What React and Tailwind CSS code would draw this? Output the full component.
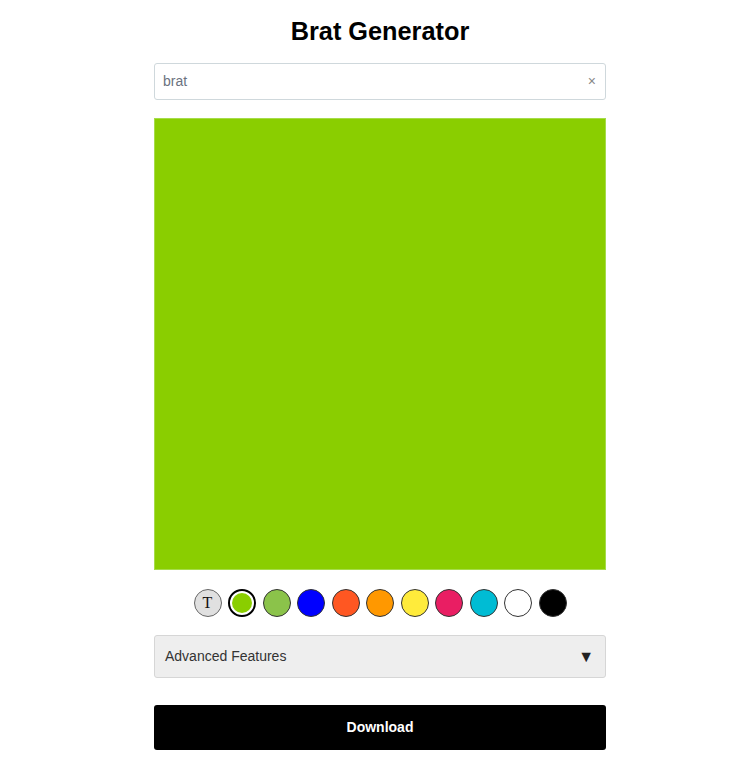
import React from "react";

const colors = ["#8BC34A", "#0000FF", "#FF5722", "#FF9800", "#FFEB3B", "#E91E63", "#00BCD4", "#FFFFFF", "#000000"];

export default function App() {
  return (
    <div className="min-h-[772px] bg-white" style={{ fontFamily: '"Liberation Sans", Arial, sans-serif' }}>
      <div className="w-[452px] ml-[154px] pt-[16px] flex flex-col">
        <h1 className="text-[25.3px] leading-[30px] font-bold text-black text-center">Brat Generator</h1>
        <div className="mt-[17px] h-[37px] border border-[#cfd8dc] rounded-[3px] flex items-center px-[8px]">
          <span className="flex-1 text-[14px] text-[#6b7280]">brat</span>
          <span className="text-[14px] text-[#888] mr-[1px]">×</span>
        </div>
        <div className="mt-[18px] w-[452px] h-[452px] bg-[#8ACE00] border border-[#a6dc4a]"></div>
        <div className="mt-[19px] flex justify-center gap-[6.5px]">
          <div className="w-[28px] h-[28px] rounded-full bg-[#e0e0e0] border border-[#666] flex items-center justify-center text-[16px] leading-none text-[#111]" style={{ fontFamily: '"Liberation Serif", "Times New Roman", serif' }}>T</div>
          <div className="w-[28px] h-[28px] rounded-full border-2 border-black p-[2px] bg-white">
            <div className="w-full h-full rounded-full bg-[#8ACE00]"></div>
          </div>
          {colors.map((c) => (
            <div key={c} className="w-[28px] h-[28px] rounded-full border border-[#333]" style={{ backgroundColor: c }}></div>
          ))}
        </div>
        <div className="mt-[18px] h-[43px] bg-[#eeeeee] border border-[#d6d6d6] rounded-[3px] flex items-center justify-between pl-[10px] pr-[11px]">
          <span className="text-[14px] text-[#333]">Advanced Features</span>
          <span className="text-[16px] text-[#222]">▼</span>
        </div>
        <button className="mt-[27px] h-[45px] bg-black rounded-[3px] text-white text-[14px] font-bold">Download</button>
      </div>
    </div>
  );
}
